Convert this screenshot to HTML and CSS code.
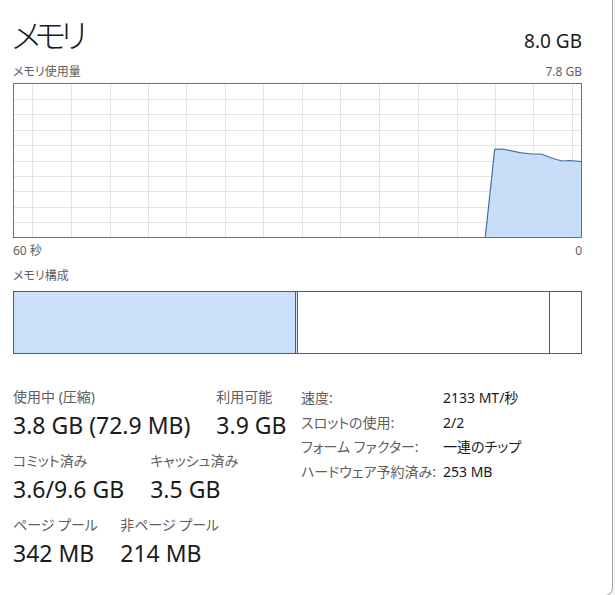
FILE: index.html
```html
<!DOCTYPE html>
<html lang="ja">

<head>
    <meta charset="UTF-8" />
    <meta name="viewport" content="width=device-width, initial-scale=1.0" />
    <title>メモリ</title>
    <link rel="stylesheet" href="styles.css">
</head>

<body>
    <div class="window">
        <div class="header">
            <p class="title">メモリ</p>
            <p class="total">8.0 GB</p>
        </div>

        <div class="caption-row caption-top">
            <span>メモリ使用量</span>
            <span>7.8 GB</span>
        </div>

        <!-- usage graph, 60 seconds -->
        <svg class="graph" width="569" height="155" viewBox="0 0 569 155">
            <g class="grid">
                <line x1="19.5" y1="0" x2="19.5" y2="155" />
                <line x1="58.5" y1="0" x2="58.5" y2="155" />
                <line x1="97.5" y1="0" x2="97.5" y2="155" />
                <line x1="135.5" y1="0" x2="135.5" y2="155" />
                <line x1="173.5" y1="0" x2="173.5" y2="155" />
                <line x1="212.5" y1="0" x2="212.5" y2="155" />
                <line x1="250.5" y1="0" x2="250.5" y2="155" />
                <line x1="289.5" y1="0" x2="289.5" y2="155" />
                <line x1="327.5" y1="0" x2="327.5" y2="155" />
                <line x1="366.5" y1="0" x2="366.5" y2="155" />
                <line x1="405.5" y1="0" x2="405.5" y2="155" />
                <line x1="444.5" y1="0" x2="444.5" y2="155" />
                <line x1="482.5" y1="0" x2="482.5" y2="155" />
                <line x1="520.5" y1="0" x2="520.5" y2="155" />
                <line x1="559.5" y1="0" x2="559.5" y2="155" />
                <line x1="0" y1="16.5" x2="569" y2="16.5" />
                <line x1="0" y1="31.5" x2="569" y2="31.5" />
                <line x1="0" y1="47.5" x2="569" y2="47.5" />
                <line x1="0" y1="62.5" x2="569" y2="62.5" />
                <line x1="0" y1="78.5" x2="569" y2="78.5" />
                <line x1="0" y1="93.5" x2="569" y2="93.5" />
                <line x1="0" y1="108.5" x2="569" y2="108.5" />
                <line x1="0" y1="124.5" x2="569" y2="124.5" />
                <line x1="0" y1="139.5" x2="569" y2="139.5" />
            </g>
            <polygon class="area"
                points="472.3,154 481.7,66.3 490,66 507,69.7 518.7,71 528.7,71 537,74.5 548.7,78 557,77.5 568,78.7 568,154" />
            <polyline class="line"
                points="472.3,154 481.7,66.3 490,66 507,69.7 518.7,71 528.7,71 537,74.5 548.7,78 557,77.5 568,78.7" />
            <rect class="frame" x="0.5" y="0.5" width="568" height="154" />
        </svg>

        <div class="caption-row caption-time">
            <span>60 秒</span>
            <span>0</span>
        </div>

        <div class="caption-row caption-mix">
            <span>メモリ構成</span>
        </div>

        <div class="mix">
            <div class="seg in-use"></div>
            <div class="seg modified"></div>
            <div class="seg standby"></div>
            <div class="seg free"></div>
        </div>

        <div class="stats">
            <div class="stats-left">
                <div class="stat-row">
                    <div class="stat">
                        <p class="label">使用中 (圧縮)</p>
                        <p class="value">3.8 GB (72.9 MB)</p>
                    </div>
                    <div class="stat">
                        <p class="label">利用可能</p>
                        <p class="value">3.9 GB</p>
                    </div>
                </div>
                <div class="stat-row">
                    <div class="stat">
                        <p class="label">コミット済み</p>
                        <p class="value">3.6/9.6 GB</p>
                    </div>
                    <div class="stat">
                        <p class="label">キャッシュ済み</p>
                        <p class="value">3.5 GB</p>
                    </div>
                </div>
                <div class="stat-row">
                    <div class="stat">
                        <p class="label">ページ プール</p>
                        <p class="value">342 MB</p>
                    </div>
                    <div class="stat">
                        <p class="label">非ページ プール</p>
                        <p class="value">214 MB</p>
                    </div>
                </div>
            </div>

            <div class="specs">
                <span class="spec-name">速度:</span>
                <span class="spec-value">2133 MT/秒</span>
                <span class="spec-name">スロットの使用:</span>
                <span class="spec-value">2/2</span>
                <span class="spec-name">フォーム ファクター:</span>
                <span class="spec-value">一連のチップ</span>
                <span class="spec-name">ハードウェア予約済み:</span>
                <span class="spec-value">253 MB</span>
            </div>
        </div>
    </div>
</body>

</html>
```

FILE: styles.css
```css
body {
    margin: 0;
    background-color: #f4f4f4;
    color: #1a1a1a;
    font-family: "Noto Sans", "Noto Sans CJK JP", sans-serif;
    font-feature-settings: "palt";
    overflow: hidden;
}

p {
    margin: 0;
}

.window {
    width: 613px;
    height: 596px;
    box-sizing: border-box;
    padding: 18px 30px 0 13px;
    background-color: white;
    border-right: 1px solid #a8a8a8;
    border-bottom: 1px solid #a8a8a8;
    border-bottom-right-radius: 8px;
}

.header {
    display: flex;
    justify-content: space-between;
    align-items: baseline;
}

.title {
    font-size: 33px;
    line-height: 36px;
    font-weight: 300;
    letter-spacing: -6px;
    margin-left: -1px;
}

.total {
    font-size: 19px;
    line-height: 20px;
}

.caption-row {
    display: flex;
    justify-content: space-between;
    font-size: 12px;
    line-height: 16px;
    color: #606060;
}

.caption-top {
    margin: 10px 0 3px;
}

.caption-time {
    margin-top: 5px;
}

.caption-mix {
    margin: 9px 0 7px;
}

.graph {
    display: block;
}

.grid line {
    stroke: #e4e4e4;
    stroke-width: 1;
}

.area {
    fill: #c7ddf8;
}

.line {
    fill: none;
    stroke: #3d6fae;
    stroke-width: 1.2;
}

.frame {
    fill: none;
    stroke: #707070;
    stroke-width: 1;
}

/* memory composition bar */
.mix {
    display: flex;
    height: 63px;
    box-sizing: border-box;
    border: 1px solid #2f639b;
}

.seg {
    border-right: 1px solid #2f639b;
}

.in-use {
    width: 281px;
    background-color: #cce0fb;
}

.modified {
    width: 1px;
    background-color: #dbe8f8;
}

.standby {
    flex: 1;
    background-color: white;
}

.free {
    width: 31px;
    border-right: none;
}

.stats {
    display: flex;
    align-items: flex-start;
    margin-top: 33px;
}

.stats-left {
    width: 288px;
}

.stat-row {
    display: flex;
    gap: 26px;
    margin-bottom: 11px;
}

/* labels overhang; the number sets the column width */
.label {
    width: 0;
    white-space: nowrap;
    font-size: 14px;
    line-height: 20px;
    color: #5e5e5e;
}

.value {
    margin-top: 3px;
    font-size: 23px;
    line-height: 30px;
}

.specs {
    display: grid;
    grid-template-columns: 142px auto;
    font-size: 14px;
    line-height: 24.5px;
    margin-top: -1px;
}

.spec-name {
    color: #5e5e5e;
}
```
